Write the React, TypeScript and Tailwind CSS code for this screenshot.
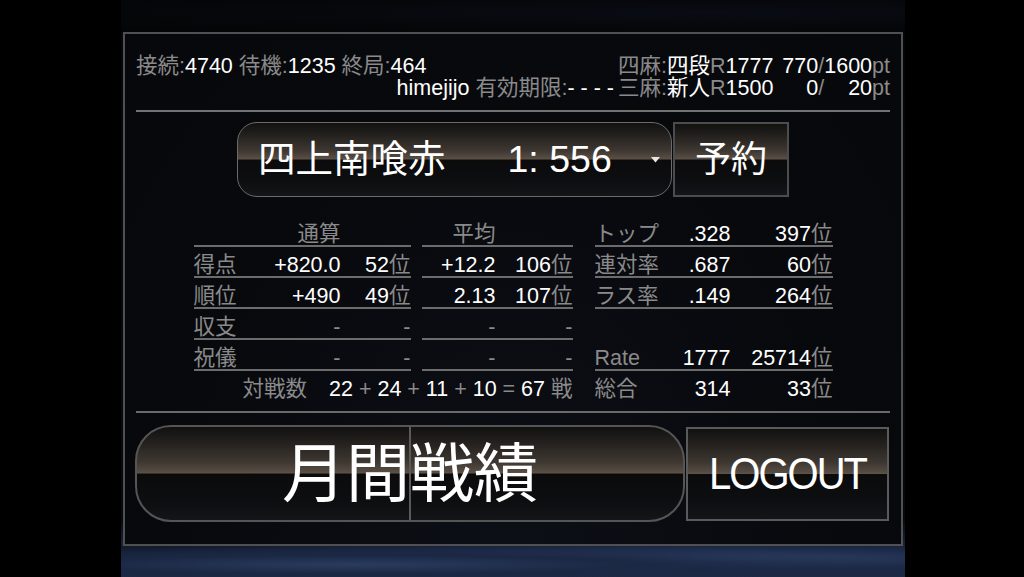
import React from "react";

const G = "text-[#8a8a8a]";
const W = "text-white";
const LINE = "border-b-2 border-[#6c6c6c]";
const BTN_BG =
  "bg-[linear-gradient(to_bottom,#121110_0%,#25221f_18%,#3f3832_38%,#564c43_48%,#5d5349_49.5%,#0b0b0c_50.5%,#0d0e10_80%,#141518_100%)]";

function Row({ children, line = true }: { children: React.ReactNode; line?: boolean }) {
  return (
    <div className={`flex h-[31px] pt-[8px] leading-[21px] whitespace-pre ${line ? LINE : "border-b-2 border-transparent"}`}>
      {children}
    </div>
  );
}

function Rank({ n, w }: { n: string; w: string }) {
  return (
    <span className={`${w} text-right`}>
      <span className={W}>{n}</span>
      <span className={G}>位</span>
    </span>
  );
}

export default function App() {
  return (
    <div className="w-[1024px] h-[577px] bg-black overflow-hidden font-['Liberation_Sans','Noto_Sans_CJK_JP',sans-serif]">
      <div className="ml-[121px] w-[784px] h-[577px] flex flex-col bg-[linear-gradient(to_bottom,#030405_0%,#05070a_5%,#07090d_90%,#1a2744_95%,#24365a_100%)]">
        <div className="h-[32px] bg-[radial-gradient(ellipse_at_75%_40%,#090c14_0%,#05070a_55%,#030405_100%)]" />
        <div className="ml-[2px] w-[780px] h-[514px] border-2 border-[#505050] bg-[radial-gradient(ellipse_at_50%_100%,#0c0f16_0%,#08090d_60%,#07080b_100%)] flex flex-col">
          {/* header */}
          <div className="px-[11px] pt-[21px]">
            <div className="grid grid-cols-[1fr_auto_auto_auto_auto_auto] text-[21.5px] leading-[22px] whitespace-pre">
              <div>
                <span className={G}>接続:</span>
                <span className={W}>4740 </span>
                <span className={G}>待機:</span>
                <span className={W}>1235 </span>
                <span className={G}>終局:</span>
                <span className={W}>464</span>
              </div>
              <div>
                <span className={G}>四麻:</span>
                <span className={W}>四段</span>
                <span className={G}>R</span>
                <span className={W}>1777</span>
              </div>
              <div className={`${W} text-right pl-[9px]`}>770</div>
              <div className={G}>/</div>
              <div className={`${W} text-right`}>1600</div>
              <div className={G}>pt</div>

              <div className="text-right pr-[4px]">
                <span className={W}>himejijo </span>
                <span className={G}>有効期限:</span>
                <span className={W}>- - - -</span>
              </div>
              <div>
                <span className={G}>三麻:</span>
                <span className={W}>新人</span>
                <span className={G}>R</span>
                <span className={W}>1500</span>
              </div>
              <div className={`${W} text-right pl-[9px]`}>0</div>
              <div className={G}>/</div>
              <div className={`${W} text-right`}>20</div>
              <div className={G}>pt</div>
            </div>
            <div className="mt-[11px] h-[2px] bg-[#727272]" />
          </div>

          {/* select row */}
          <div className="mt-[10px] flex justify-center">
            <div className={`w-[435px] h-[75px] rounded-[20px] border-[1.5px] border-[#6a6a6a] ${BTN_BG} flex items-center pl-[20px] pr-[11px] text-white text-[37.5px] leading-none whitespace-pre`}>
              <span>四上南喰赤</span>
              <span className="ml-[62px]">1: 556</span>
              <svg className="ml-auto" width="9" height="6" viewBox="0 0 9 6">
                <path d="M0 0 L9 0 L4.5 5.5 Z" fill="#e8e8e8" />
              </svg>
            </div>
            <div className={`w-[116px] h-[75px] ml-[1px] border-2 border-[#4c4c4c] ${BTN_BG} flex items-center justify-center text-white text-[36px] leading-none`}>
              予約
            </div>
          </div>

          {/* stats */}
          <div className="mt-[19px] flex justify-center text-[21.5px]">
            <div className="flex flex-col w-[379px]">
              <div className="flex">
                <div className="w-[217px]">
                  <Row>
                    <span className={`w-[147px] text-right ${G}`}>通算</span>
                  </Row>
                  <Row>
                    <span className={`w-[70px] ${G}`}>得点</span>
                    <span className={`w-[77px] text-right ${W}`}>+820.0</span>
                    <Rank n="52" w="w-[70px]" />
                  </Row>
                  <Row>
                    <span className={`w-[70px] ${G}`}>順位</span>
                    <span className={`w-[77px] text-right ${W}`}>+490</span>
                    <Rank n="49" w="w-[70px]" />
                  </Row>
                  <Row>
                    <span className={`w-[70px] ${G}`}>収支</span>
                    <span className={`w-[77px] text-right ${G}`}>-</span>
                    <span className={`w-[70px] text-right ${G}`}>-</span>
                  </Row>
                  <Row>
                    <span className={`w-[70px] ${G}`}>祝儀</span>
                    <span className={`w-[77px] text-right ${G}`}>-</span>
                    <span className={`w-[70px] text-right ${G}`}>-</span>
                  </Row>
                </div>
                <div className="w-[151px] ml-[11px]">
                  <Row>
                    <span className={`w-[74px] text-right ${G}`}>平均</span>
                  </Row>
                  <Row>
                    <span className={`w-[74px] text-right ${W}`}>+12.2</span>
                    <Rank n="106" w="w-[77px]" />
                  </Row>
                  <Row>
                    <span className={`w-[74px] text-right ${W}`}>2.13</span>
                    <Rank n="107" w="w-[77px]" />
                  </Row>
                  <Row>
                    <span className={`w-[74px] text-right ${G}`}>-</span>
                    <span className={`w-[77px] text-right ${G}`}>-</span>
                  </Row>
                  <Row>
                    <span className={`w-[74px] text-right ${G}`}>-</span>
                    <span className={`w-[77px] text-right ${G}`}>-</span>
                  </Row>
                </div>
              </div>
              <Row line={false}>
                <span className="ml-auto">
                  <span className={G}>対戦数</span>
                  <span className={`${W} ml-[22px]`}>22 </span>
                  <span className={G}>+ </span>
                  <span className={W}>24 </span>
                  <span className={G}>+ </span>
                  <span className={W}>11 </span>
                  <span className={G}>+ </span>
                  <span className={W}>10 </span>
                  <span className={G}>= </span>
                  <span className={W}>67 </span>
                  <span className={G}>戦</span>
                </span>
              </Row>
            </div>
            <div className="w-[238px] ml-[22px]">
              <Row>
                <span className={`w-[60px] ${G}`}>トップ</span>
                <span className={`w-[76px] text-right ${W}`}>.328</span>
                <Rank n="397" w="w-[102px]" />
              </Row>
              <Row>
                <span className={`w-[60px] ${G}`}>連対率</span>
                <span className={`w-[76px] text-right ${W}`}>.687</span>
                <Rank n="60" w="w-[102px]" />
              </Row>
              <Row>
                <span className={`w-[60px] ${G}`}>ラス率</span>
                <span className={`w-[76px] text-right ${W}`}>.149</span>
                <Rank n="264" w="w-[102px]" />
              </Row>
              <Row line={false}>
                <span> </span>
              </Row>
              <Row>
                <span className={`w-[60px] ${G}`}>Rate</span>
                <span className={`w-[76px] text-right ${W}`}>1777</span>
                <Rank n="25714" w="w-[102px]" />
              </Row>
              <Row line={false}>
                <span className={`w-[60px] ${G}`}>総合</span>
                <span className={`w-[76px] text-right ${W}`}>314</span>
                <Rank n="33" w="w-[102px]" />
              </Row>
            </div>
          </div>

          <div className="mx-[11px] mt-[9px] h-[2px] bg-[#6a6a6a]" />

          {/* bottom buttons */}
          <div className="mt-[12px] pl-[10px] flex items-center">
            <div className={`relative w-[550px] h-[97px] rounded-[36px] border-2 border-[#555] ${BTN_BG} flex items-center justify-center`}>
              <div className="absolute left-1/2 top-0 bottom-0 w-[2px] -ml-[1px] bg-[#5a5a5a]" />
              <span className="relative text-white text-[64px] leading-none">月間戦績</span>
            </div>
            <div className={`w-[203px] h-[94px] ml-[1px] border-2 border-[#5a5a5a] ${BTN_BG} flex items-center justify-center`}>
              <span className="text-white text-[40px] leading-none tracking-[-2px] scale-y-110">LOGOUT</span>
            </div>
          </div>
        </div>
        <div className="flex-1 bg-[radial-gradient(ellipse_at_30%_60%,#2a3b5e_0%,#1b2844_35%,transparent_70%),radial-gradient(ellipse_at_75%_40%,#2d4064_0%,#1c2947_40%,transparent_75%),linear-gradient(to_bottom,#121a2c,#1d2a46)]" />
      </div>
    </div>
  );
}
